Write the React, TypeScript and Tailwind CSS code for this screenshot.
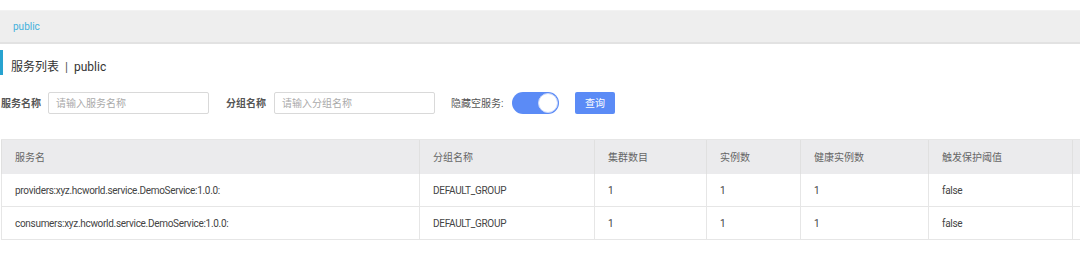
import React from "react";

const rows = [
  { name: "providers:xyz.hcworld.service.DemoService:1.0.0:", group: "DEFAULT_GROUP", cluster: "1", inst: "1", healthy: "1", protect: "false" },
  { name: "consumers:xyz.hcworld.service.DemoService:1.0.0:", group: "DEFAULT_GROUP", cluster: "1", inst: "1", healthy: "1", protect: "false" },
];

const font = { fontFamily: 'Roboto, "Noto Sans CJK SC", sans-serif' };

export default function App() {
  return (
    <div className="w-[1080px] h-[253px] bg-white overflow-hidden" style={font}>
      <div className="h-[10px]" />
      <div className="h-[34px] bg-[#eeeeee] border-b-2 border-[#e2e2e2] border-t border-t-[#f2f2f2] flex items-center pl-[13px]">
        <span className="text-[10px] text-[#3fb0dc]">public</span>
      </div>
      <div className="mt-[6px] h-[25px] border-l-[3px] border-[#27a3d0] flex items-start pt-[8px] pl-[8px]">
        <span className="text-[12px] leading-[18px] text-[#333]">服务列表</span>
        <span className="text-[12px] leading-[18px] text-[#555] mx-[6px]">|</span>
        <span className="text-[12px] leading-[18px] text-[#333]">public</span>
      </div>
      <div className="mt-[17px] flex items-center h-[22px]">
        <span className="text-[10px] font-bold text-[#555] pl-[1px] w-[48px]">服务名称</span>
        <div className="w-[161px] h-[22px] border border-[#d9d9d9] rounded-[2px] flex items-center pl-[7px]">
          <span className="text-[10px] text-[#aaa]">请输入服务名称</span>
        </div>
        <span className="text-[10px] font-bold text-[#555] ml-[17px] w-[48px]">分组名称</span>
        <div className="w-[161px] h-[22px] border border-[#d9d9d9] rounded-[2px] flex items-center pl-[7px]">
          <span className="text-[10px] text-[#aaa]">请输入分组名称</span>
        </div>
        <span className="text-[10px] text-[#555] ml-[16px] w-[61px]">隐藏空服务:</span>
        <div className="w-[47px] h-[22px] rounded-full bg-[#5b8bf6] flex items-center justify-end pr-[1px]">
          <div className="w-[20px] h-[20px] rounded-full bg-white border border-[#c9d7fb]" />
        </div>
        <div className="ml-[16px] w-[40px] h-[22px] rounded-[2px] bg-[#5b8bf6] flex items-center justify-center">
          <span className="text-[10px] text-white">查询</span>
        </div>
      </div>
      <div className="mt-[25px] ml-[1px]">
        <div className="grid grid-cols-[419px_175px_112px_94px_128px_144px_100px] border-t border-[#e6e6e6]">
          {["服务名", "分组名称", "集群数目", "实例数", "健康实例数", "触发保护阈值", ""].map((h, i) => (
            <div
              key={i}
              className={`h-[34px] bg-[#ebebed] flex items-center pl-[13px] text-[10px] text-[#666] border-[#e0e0e0] ${i === 0 ? "border-l" : ""} border-r`}
            >
              {h}
            </div>
          ))}
          {rows.map((r, ri) =>
            [r.name, r.group, r.cluster, r.inst, r.healthy, r.protect, ""].map((c, i) => (
              <div
                key={`${ri}-${i}`}
                className={`h-[33px] flex items-center pl-[13px] text-[10px] tracking-[-0.3px] text-[#444] border-[#e6e6e6] border-b ${i === 0 ? "border-l" : ""} border-r`}
              >
                {c}
              </div>
            ))
          )}
        </div>
      </div>
    </div>
  );
}
